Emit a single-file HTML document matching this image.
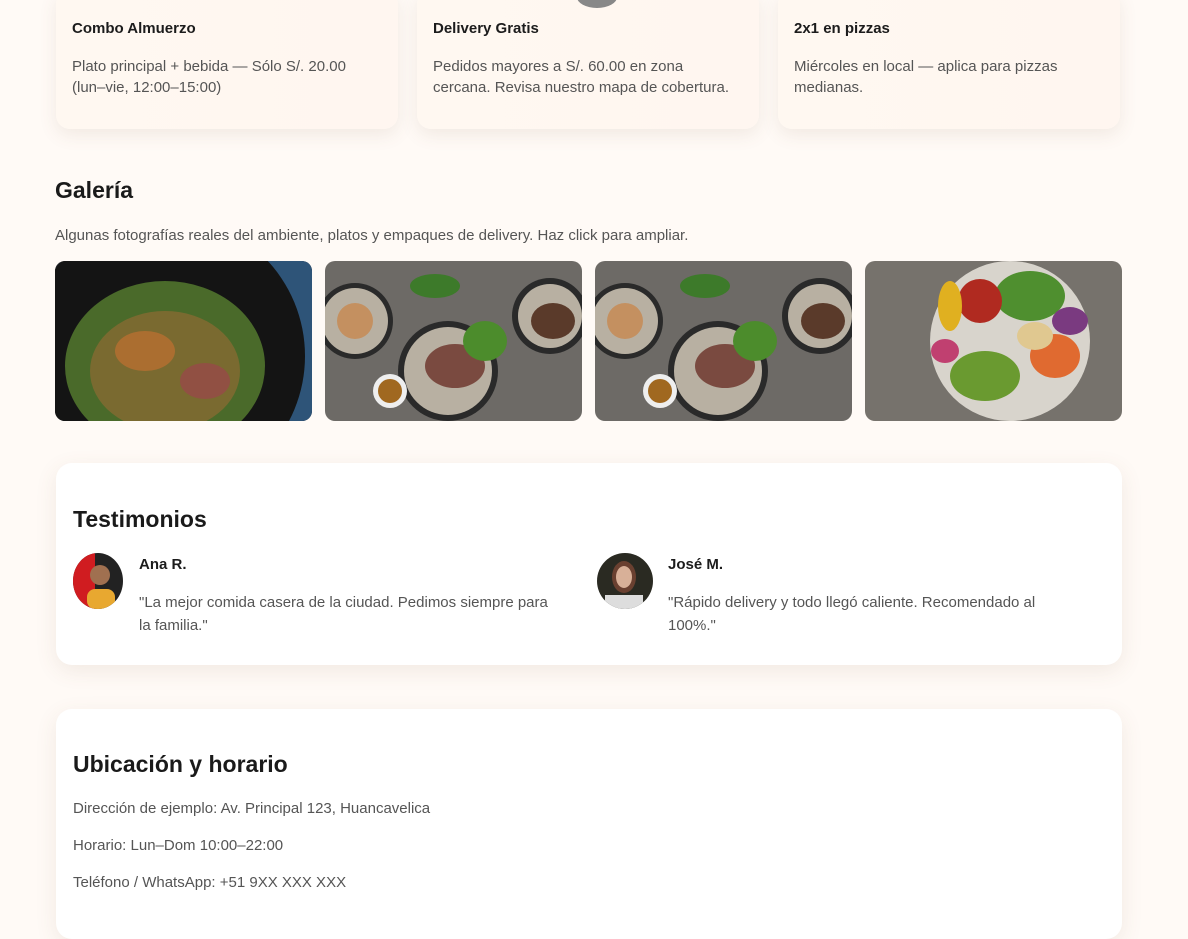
<!DOCTYPE html>
<html><head><meta charset="utf-8"><style>
*{box-sizing:border-box;margin:0;padding:0}
body{width:1188px;height:913px;overflow:hidden;background:#fffaf6;font-family:"Liberation Sans",sans-serif;color:#1c1c1c;position:relative}
.card{position:absolute;border-radius:14px;background:linear-gradient(90deg,#fff8f1,#fff6f0);box-shadow:0 6px 18px rgba(120,90,60,.10)}
.card h4{position:absolute;left:16px;top:20px;font-size:15px;font-weight:bold}
.card p{position:absolute;left:16px;top:56px;width:300px;font-size:15px;line-height:21px;color:#555}
h2{position:absolute;font-size:23px;font-weight:bold;color:#1a1a1a}
.desc{position:absolute;font-size:15px;color:#555}
.img{position:absolute;top:261px;width:257px;height:160px;border-radius:10px;overflow:hidden}
.box{position:absolute;left:56px;width:1066px;background:#fff;border-radius:16px;box-shadow:0 6px 22px rgba(120,90,60,.10)}
.av{position:absolute;width:50px;height:56px;border-radius:50%;overflow:hidden}
.nm{position:absolute;font-size:15px;font-weight:bold}
.tx{position:absolute;font-size:15px;line-height:23px;color:#555}
.ln{position:absolute;left:73px;font-size:15px;color:#555}
</style></head><body>
<div class="card" style="left:56px;top:-10px;width:342px;height:139px"><h4 style="top:30px">Combo Almuerzo</h4><p style="top:66px">Plato principal + bebida — Sólo S/. 20.00 (lun–vie, 12:00–15:00)</p></div>
<div class="card" style="left:417px;top:-10px;width:342px;height:139px"><h4 style="top:30px">Delivery Gratis</h4><p style="top:66px">Pedidos mayores a S/. 60.00 en zona cercana. Revisa nuestro mapa de cobertura.</p></div>
<div class="card" style="left:778px;top:-10px;width:342px;height:139px"><h4 style="top:30px">2x1 en pizzas</h4><p style="top:66px;width:280px">Miércoles en local — aplica para pizzas medianas.</p></div>
<div style="position:absolute;left:577px;top:-14px;width:40px;height:22px;border-radius:50%;background:#888;z-index:5"></div>

<h2 style="left:55px;top:177px">Galería</h2>
<div class="desc" style="left:55px;top:227px">Algunas fotografías reales del ambiente, platos y empaques de delivery. Haz click para ampliar.</div>

<div class="img" style="left:55px"><svg width="257" height="160"><rect width="257" height="160" fill="#1b1d22"/><rect x="190" width="67" height="160" fill="#2e5478"/><circle cx="110" cy="95" r="140" fill="#141414"/><ellipse cx="110" cy="105" rx="100" ry="85" fill="#4a6a2a"/><ellipse cx="110" cy="110" rx="75" ry="60" fill="#7a6a30"/><ellipse cx="90" cy="90" rx="30" ry="20" fill="#c07030" opacity=".7"/><ellipse cx="150" cy="120" rx="25" ry="18" fill="#a04050" opacity=".6"/></svg></div>
<div class="img" style="left:325px"><svg width="257" height="160"><rect width="257" height="160" fill="#6d6a66"/><circle cx="30" cy="60" r="38" fill="#2a2a2a"/><circle cx="30" cy="60" r="33" fill="#b8b0a2"/><circle cx="30" cy="60" r="18" fill="#c49060"/><circle cx="123" cy="110" r="50" fill="#2a2a2a"/><circle cx="123" cy="110" r="44" fill="#b8b0a2"/><ellipse cx="130" cy="105" rx="30" ry="22" fill="#7a4a40"/><ellipse cx="160" cy="80" rx="22" ry="20" fill="#4c8c2c"/><circle cx="225" cy="55" r="38" fill="#2a2a2a"/><circle cx="225" cy="55" r="32" fill="#b8b0a2"/><ellipse cx="228" cy="60" rx="22" ry="18" fill="#5a3a2a"/><circle cx="65" cy="130" r="17" fill="#eee"/><circle cx="65" cy="130" r="12" fill="#a06820"/><ellipse cx="110" cy="25" rx="25" ry="12" fill="#3d7a2a"/></svg></div>
<div class="img" style="left:595px"><svg width="257" height="160"><rect width="257" height="160" fill="#6d6a66"/><circle cx="30" cy="60" r="38" fill="#2a2a2a"/><circle cx="30" cy="60" r="33" fill="#b8b0a2"/><circle cx="30" cy="60" r="18" fill="#c49060"/><circle cx="123" cy="110" r="50" fill="#2a2a2a"/><circle cx="123" cy="110" r="44" fill="#b8b0a2"/><ellipse cx="130" cy="105" rx="30" ry="22" fill="#7a4a40"/><ellipse cx="160" cy="80" rx="22" ry="20" fill="#4c8c2c"/><circle cx="225" cy="55" r="38" fill="#2a2a2a"/><circle cx="225" cy="55" r="32" fill="#b8b0a2"/><ellipse cx="228" cy="60" rx="22" ry="18" fill="#5a3a2a"/><circle cx="65" cy="130" r="17" fill="#eee"/><circle cx="65" cy="130" r="12" fill="#a06820"/><ellipse cx="110" cy="25" rx="25" ry="12" fill="#3d7a2a"/></svg></div>
<div class="img" style="left:865px"><svg width="257" height="160"><rect width="257" height="160" fill="#76726c"/><circle cx="145" cy="80" r="80" fill="#d8d4cc"/><ellipse cx="165" cy="35" rx="35" ry="25" fill="#4f8f2f"/><ellipse cx="115" cy="40" rx="22" ry="22" fill="#b02a20"/><ellipse cx="85" cy="45" rx="12" ry="25" fill="#e0b020"/><ellipse cx="120" cy="115" rx="35" ry="25" fill="#6a9a30"/><ellipse cx="190" cy="95" rx="25" ry="22" fill="#e06a30"/><ellipse cx="170" cy="75" rx="18" ry="14" fill="#e0c890"/><ellipse cx="205" cy="60" rx="18" ry="14" fill="#7a3a80"/><ellipse cx="80" cy="90" rx="14" ry="12" fill="#c04070"/></svg></div>

<div class="box" style="top:463px;height:202px">
<h2 style="left:17px;top:43px">Testimonios</h2>
<div class="av" style="left:17px;top:90px"><svg width="50" height="56"><rect width="50" height="56" fill="#222"/><rect width="22" height="56" fill="#d01c20"/><circle cx="27" cy="22" r="10" fill="#a07050"/><rect x="14" y="36" width="28" height="20" rx="8" fill="#e8a830"/></svg></div>
<div class="nm" style="left:83px;top:93px">Ana R.</div>
<div class="tx" style="left:83px;top:128px;width:420px">"La mejor comida casera de la ciudad. Pedimos siempre para la familia."</div>
<div class="av" style="left:541px;top:90px;width:56px"><svg width="56" height="56"><rect width="56" height="56" fill="#2a2a22"/><ellipse cx="27" cy="24" rx="12" ry="16" fill="#6a4030"/><ellipse cx="27" cy="24" rx="8" ry="11" fill="#d8b098"/><rect x="8" y="42" width="38" height="14" fill="#ddd"/></svg></div>
<div class="nm" style="left:612px;top:93px">José M.</div>
<div class="tx" style="left:612px;top:128px;width:400px">"Rápido delivery y todo llegó caliente. Recomendado al 100%."</div>
</div>

<div class="box" style="top:709px;height:230px"></div>
<h2 style="left:73px;top:751px">Ubicación y horario</h2>
<div class="ln" style="top:800px">Dirección de ejemplo: Av. Principal 123, Huancavelica</div>
<div class="ln" style="top:837px">Horario: Lun–Dom 10:00–22:00</div>
<div class="ln" style="top:874px">Teléfono / WhatsApp: +51 9XX XXX XXX</div>
</body></html>
